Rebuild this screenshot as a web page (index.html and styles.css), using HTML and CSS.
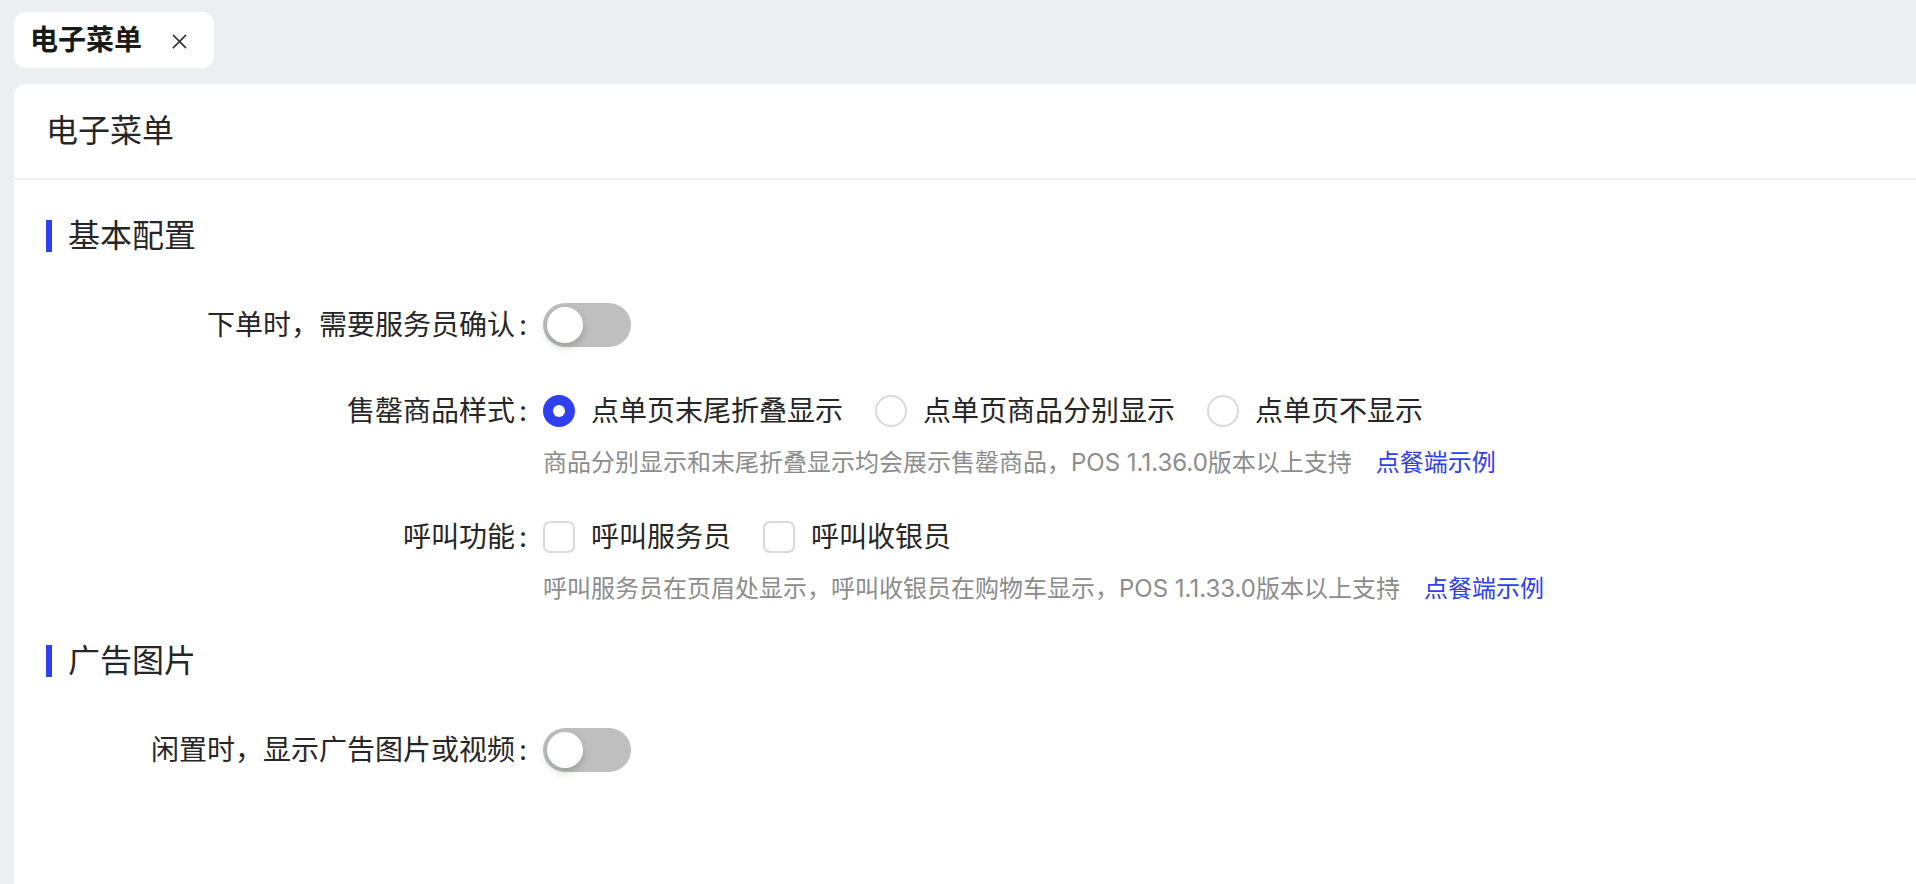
FILE: index.html
```html
<!DOCTYPE html>
<html lang="zh-CN">
<head>
<meta charset="utf-8">
<title>电子菜单</title>
<link rel="stylesheet" href="styles.css">
</head>
<body>
<div class="page">
  <div class="tabs">
    <div class="tab">
      <span class="tab-title">电子菜单</span>
      <svg class="tab-close" viewBox="0 0 16 16" width="16" height="16"><path d="M1.5 1.5L14.5 14.5M14.5 1.5L1.5 14.5" stroke="#333" stroke-width="1.7" fill="none" stroke-linecap="round"/></svg>
    </div>
  </div>
  <div class="card">
    <div class="card-head">电子菜单</div>
    <div class="card-body">
      <div class="section-title">基本配置</div>

      <div class="form-item">
        <div class="label">下单时，需要服务员确认<span class="colon">:</span></div>
        <div class="control">
          <div class="control-input"><span class="switch"><span class="knob"></span></span></div>
        </div>
      </div>

      <div class="form-item">
        <div class="label">售罄商品样式<span class="colon">:</span></div>
        <div class="control">
          <div class="control-input">
            <label class="choice"><span class="radio checked"></span><span class="choice-text">点单页末尾折叠显示</span></label>
            <label class="choice"><span class="radio"></span><span class="choice-text">点单页商品分别显示</span></label>
            <label class="choice"><span class="radio"></span><span class="choice-text">点单页不显示</span></label>
          </div>
          <div class="extra">商品分别显示和末尾折叠显示均会展示售罄商品，POS 1.1.36.0版本以上支持<a class="link">点餐端示例</a></div>
        </div>
      </div>

      <div class="form-item">
        <div class="label">呼叫功能<span class="colon">:</span></div>
        <div class="control">
          <div class="control-input">
            <label class="choice"><span class="checkbox"></span><span class="choice-text">呼叫服务员</span></label>
            <label class="choice"><span class="checkbox"></span><span class="choice-text">呼叫收银员</span></label>
          </div>
          <div class="extra">呼叫服务员在页眉处显示，呼叫收银员在购物车显示，POS 1.1.33.0版本以上支持<a class="link">点餐端示例</a></div>
        </div>
      </div>

      <div class="section-title second">广告图片</div>

      <div class="form-item">
        <div class="label">闲置时，显示广告图片或视频<span class="colon">:</span></div>
        <div class="control">
          <div class="control-input"><span class="switch"><span class="knob"></span></span></div>
        </div>
      </div>
    </div>
  </div>
</div>
</body>
</html>
```
FILE: styles.css
```css
html, body {
  margin: 0;
  padding: 0;
  background: #edeef2;
  font-family: Inter, "Noto Sans CJK SC", sans-serif;
  color: #262626;
  overflow: hidden;
}

.page {
  padding: 12px 0 0 14px;
  height: 884px;
  box-sizing: border-box;
  display: flex;
  flex-direction: column;
  gap: 16px;
}

.tabs {
  display: flex;
}

.tab {
  height: 56px;
  background: #fff;
  border-radius: 12px;
  display: flex;
  align-items: center;
  padding: 0 27px 0 16px;
  box-sizing: border-box;
  width: 200px;
}

.tab-title {
  font-size: 28px;
  font-weight: 700;
  color: #1a1a1a;
  line-height: 56px;
}

.tab-close {
  margin-left: auto;
  width: 15px;
  height: 15px;
  margin-top: 3px;
}

.card {
  flex: 1;
  background: #fff;
  border-radius: 12px 0 0 0;
}

.card-head {
  height: 94px;
  border-bottom: 2px solid #f0f0f0;
  padding-left: 32px;
  font-size: 32px;
  font-weight: 400;
  line-height: 94px;
  color: #262626;
}

.card-body {
  padding: 40px 32px 0 32px;
}

.section-title {
  height: 32px;
  line-height: 32px;
  font-size: 32px;
  font-weight: 400;
  color: #262626;
  border-left: 6px solid #2f40f0;
  padding-left: 16px;
  margin-bottom: 41px;
}

.section-title.second {
  margin-top: 36px;
}

.form-item {
  display: flex;
  align-items: flex-start;
  margin-bottom: 22px;
}

.label {
  width: 497px;
  flex: none;
  height: 64px;
  line-height: 64px;
  text-align: right;
  font-size: 28px;
  color: #262626;
  white-space: nowrap;
}

.colon {
  margin: 0 16px 0 4px;
}

.control {
  display: flex;
  flex-direction: column;
}

.control-input {
  height: 64px;
  display: flex;
  align-items: center;
}

.switch {
  width: 88px;
  height: 44px;
  border-radius: 22px;
  background: #bfbfbf;
  display: flex;
  align-items: center;
  padding-left: 4px;
  box-sizing: border-box;
}

.knob {
  width: 36px;
  height: 36px;
  border-radius: 50%;
  background: #fff;
  box-shadow: 0 4px 8px rgba(0, 35, 11, 0.2);
}

.choice {
  display: flex;
  align-items: center;
  margin-right: 16px;
}

.choice-text {
  font-size: 28px;
  color: #262626;
  padding: 0 16px;
  line-height: 64px;
}

.radio {
  width: 32px;
  height: 32px;
  border-radius: 50%;
  border: 2px solid #d9d9d9;
  box-sizing: border-box;
  background: #fff;
  display: flex;
  align-items: center;
  justify-content: center;
}

.radio.checked {
  border-color: #2f40f0;
  background: #2f40f0;
}

.radio.checked::after {
  content: "";
  width: 12px;
  height: 12px;
  border-radius: 50%;
  background: #fff;
}

.checkbox {
  width: 32px;
  height: 32px;
  border-radius: 7px;
  border: 2px solid #d9d9d9;
  box-sizing: border-box;
  background: #fff;
}

.extra {
  font-size: 24px;
  line-height: 40px;
  color: #8c8c8c;
  white-space: nowrap;
}

.link {
  color: #2f40f0;
  margin-left: 24px;
  cursor: pointer;
}
```
